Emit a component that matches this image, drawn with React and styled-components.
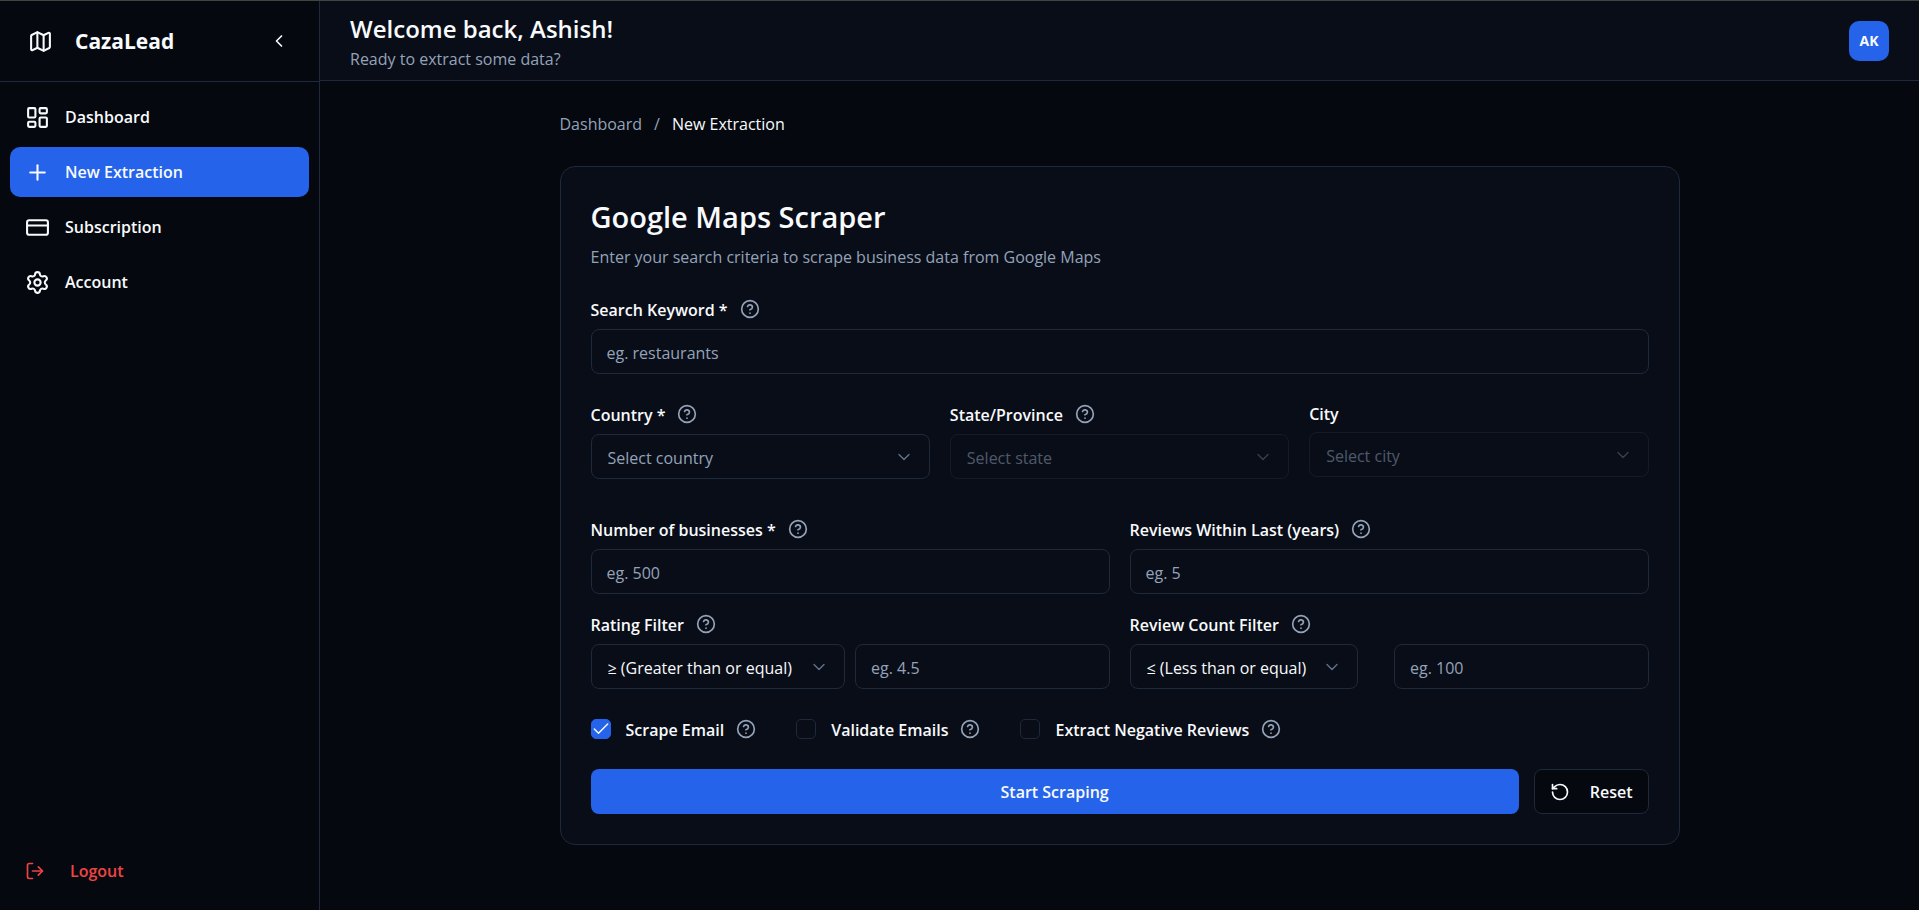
import React from 'react';
import {useState} from 'react';
import styled,{createGlobalStyle} from 'styled-components';
import {Check,ChevronDown,ChevronLeft,CircleHelp,CreditCard,LayoutDashboard,LogOut,Map,Plus,RotateCcw,Settings} from 'lucide-react';

const navItems=[
  {name:"Dashboard",icon:LayoutDashboard},
  {name:"New Extraction",icon:Plus},
  {name:"Subscription",icon:CreditCard},
  {name:"Account",icon:Settings},
];
const defaultChecks={email:true,validate:false,negative:false};

function Help({about}) {
  return (
    <HelpButton type="button" aria-label={`Help: ${about}`}><CircleHelp size={20}/></HelpButton>
  );
}

function Field({id,label,help=true,children}) {
  return (
    <FieldBox>
      <LabelRow>
        <Label htmlFor={id}>{label}</Label>
        {help && <Help about={label}/>}
      </LabelRow>
      {children}
    </FieldBox>
  );
}

function Dropdown({id,options,placeholder,disabled,fit,label}) {
  return (
    <SelectWrap $disabled={disabled} $fit={fit}>
      <Select id={id} disabled={disabled} $muted={placeholder} aria-label={label}>
        {options.map((option)=>(
          <option key={option}>{option}</option>
        ))}
      </Select>
      <ChevronDown size={20} strokeWidth={1.6}/>
    </SelectWrap>
  );
}

function CheckOption({id,label,checked,onChange}) {
  return (
    <CheckItem>
      <CheckMark>
        <CheckBox id={id} type="checkbox" checked={checked} onChange={onChange}/>
        {checked && <Check size={20} strokeWidth={1.8}/>}
      </CheckMark>
      <LabelRow>
        <Label htmlFor={id}>{label}</Label>
        <Help about={label}/>
      </LabelRow>
    </CheckItem>
  );
}

function App() {
  const[activePage,setActivePage]=useState("New Extraction");
  const[checks,setChecks]=useState(defaultChecks);
  const toggle=(key)=>setChecks({...checks,[key]:!checks[key]});
  return (
    <>
    <GlobalStyle/>
    <Page>
      <Sidebar>
        <Brand>
          <Map size={25}/>
          <BrandName>CazaLead</BrandName>
          <IconButton type="button" aria-label="Collapse sidebar"><ChevronLeft size={20}/></IconButton>
        </Brand>
        <Nav>
          {navItems.map(({name,icon:Icon})=>(
            <NavLink key={name} href="#" $active={activePage===name} onClick={()=>setActivePage(name)}>
              <Icon size={25}/>
              {name}
            </NavLink>
          ))}
        </Nav>
        <Logout type="button"><LogOut size={20}/>Logout</Logout>
      </Sidebar>
      <Content>
        <Header>
          <div>
            <Welcome>Welcome back, Ashish!</Welcome>
            <Muted>Ready to extract some data?</Muted>
          </div>
          <Avatar type="button">AK</Avatar>
        </Header>
        <Main>
          <Breadcrumb aria-label="Breadcrumb">
            <a href="#">Dashboard</a>
            <span>/</span>
            <Current>New Extraction</Current>
          </Breadcrumb>
          <Card onSubmit={(e)=>e.preventDefault()} onReset={()=>setChecks(defaultChecks)}>
            <CardHeader>
              <Title>Google Maps Scraper</Title>
              <Muted>Enter your search criteria to scrape business data from Google Maps</Muted>
            </CardHeader>
            <Field id="keyword" label="Search Keyword *">
              <Input id="keyword" placeholder="eg. restaurants"/>
            </Field>
            <Places>
              <Field id="country" label="Country *">
                <Dropdown id="country" options={["Select country"]} placeholder/>
              </Field>
              <Field id="state" label="State/Province">
                <Dropdown id="state" options={["Select state"]} placeholder disabled/>
              </Field>
              <Field id="city" label="City" help={false}>
                <Dropdown id="city" options={["Select city"]} placeholder disabled/>
              </Field>
            </Places>
            <Filters>
              <Field id="count" label="Number of businesses *">
                <Input id="count" placeholder="eg. 500"/>
              </Field>
              <Field id="years" label="Reviews Within Last (years)">
                <Input id="years" placeholder="eg. 5"/>
              </Field>
              <Field id="rating" label="Rating Filter">
                <Pair>
                  <Dropdown label="Rating comparison" options={["≥ (Greater than or equal)"]}/>
                  <Input id="rating" placeholder="eg. 4.5"/>
                </Pair>
              </Field>
              <Field id="reviews" label="Review Count Filter">
                <Pair>
                  <Dropdown label="Review count comparison" options={["≤ (Less than or equal)"]} fit/>
                  <Input id="reviews" placeholder="eg. 100"/>
                </Pair>
              </Field>
            </Filters>
            <Checks>
              <CheckOption id="email" label="Scrape Email" checked={checks.email} onChange={()=>toggle("email")}/>
              <CheckOption id="validate" label="Validate Emails" checked={checks.validate} onChange={()=>toggle("validate")}/>
              <CheckOption id="negative" label="Extract Negative Reviews" checked={checks.negative} onChange={()=>toggle("negative")}/>
            </Checks>
            <Actions>
              <Submit type="submit">Start Scraping</Submit>
              <Reset type="reset"><RotateCcw size={20}/>Reset</Reset>
            </Actions>
          </Card>
        </Main>
      </Content>
    </Page>
    </>
  );
}

const GlobalStyle=createGlobalStyle`
*{
    box-sizing:border-box;
    margin:0;
}
body{
    background:#05080f;
    color:#f8fafc;
    font-family:"Segoe UI","Open Sans","Noto Sans",sans-serif;
    font-size:16px;
    line-height:24px;
}
button,input,select{
    font:inherit;
    color:inherit;
}
button{
    padding:0;
    border:none;
    background:none;
    cursor:pointer;
}
a{
    color:inherit;
    text-decoration:none;
}
svg{
    flex-shrink:0;
}
`;
const Page=styled.div`
display:flex;
min-height:100vh;
border-top:1px solid #41443f;
`;
const Sidebar=styled.aside`
display:flex;
flex-direction:column;
width:320px;
flex-shrink:0;
border-right:1px solid #1e293b;
`;
const Brand=styled.div`
display:flex;
align-items:center;
height:81px;
padding:0 30px 0 28px;
border-bottom:1px solid #1e293b;
`;
const BrandName=styled.span`
flex:1;
margin-left:22px;
font-size:21px;
font-weight:700;
`;
const IconButton=styled.button`
display:flex;
`;
const Nav=styled.nav`
display:flex;
flex-direction:column;
gap:5px;
flex:1;
padding:10px;
`;
const NavLink=styled.a`
display:flex;
align-items:center;
gap:15px;
height:50px;
padding:0 15px;
border-radius:10px;
font-weight:600;
background:${({$active})=>$active ? "#2563eb" : "transparent"};
`;
const Logout=styled.button`
display:flex;
align-items:center;
gap:25px;
height:78px;
padding:0 25px;
color:#ef4444;
font-weight:600;
`;
const Content=styled.div`
flex:1;
min-width:0;
`;
const Header=styled.header`
display:flex;
align-items:center;
justify-content:space-between;
height:80px;
padding:0 30px;
background:#090d18;
border-bottom:1px solid #1e293b;
`;
const Welcome=styled.h1`
font-size:24px;
font-weight:600;
line-height:36px;
`;
const Muted=styled.p`
color:#94a3b8;
`;
const Avatar=styled.button`
width:40px;
height:40px;
border-radius:10px;
background:#2563eb;
font-size:14px;
font-weight:700;
`;
const Main=styled.main`
max-width:1120px;
margin:0 auto;
padding:30px 0;
`;
const Breadcrumb=styled.nav`
display:flex;
gap:12px;
margin-bottom:28px;
line-height:27px;
color:#94a3b8;
`;
const Current=styled.span`
color:#f8fafc;
`;
const Card=styled.form`
display:flex;
flex-direction:column;
gap:30px;
padding:30px;
background:#090d18;
border:1px solid #1e293b;
border-radius:15px;
`;
const CardHeader=styled.div`
display:flex;
flex-direction:column;
gap:8px;
`;
const Title=styled.h2`
font-size:29px;
font-weight:600;
line-height:40px;
`;
const FieldBox=styled.div`
display:flex;
flex-direction:column;
gap:10px;
min-width:0;
`;
const LabelRow=styled.div`
display:flex;
align-items:center;
gap:12px;
`;
const Label=styled.label`
padding-top:2px;
font-weight:600;
line-height:16px;
`;
const HelpButton=styled.button`
display:flex;
color:#94a3b8;
`;
const Input=styled.input`
width:100%;
min-width:0;
height:45px;
padding:2px 15px 0;
background:transparent;
border:1px solid #1e293b;
border-radius:8px;
&::placeholder{
    color:#94a3b8;
    opacity:1;
}
`;
const SelectWrap=styled.div`
display:grid;
align-items:center;
justify-self:${({$fit})=>$fit ? "start" : "stretch"};
opacity:${({$disabled})=>$disabled ? 0.5 : 1};
svg{
    grid-area:1/1;
    justify-self:end;
    margin-right:16px;
    color:#64748b;
    pointer-events:none;
}
`;
const Select=styled.select`
grid-area:1/1;
appearance:none;
width:100%;
height:45px;
padding:2px 50px 0 16px;
background:transparent;
border:1px solid #1e293b;
border-radius:8px;
color:${({$muted})=>$muted ? "#94a3b8" : "#f8fafc"};
opacity:1;
`;
const Places=styled.div`
display:grid;
grid-template-columns:repeat(3,1fr);
gap:20px;
margin-bottom:10px;
`;
const Filters=styled.div`
display:grid;
grid-template-columns:repeat(2,1fr);
gap:20px;
`;
const Pair=styled.div`
display:grid;
grid-template-columns:repeat(2,1fr);
gap:10px;
`;
const Checks=styled.div`
display:flex;
gap:40px;
`;
const CheckItem=styled.div`
display:flex;
align-items:center;
gap:15px;
`;
const CheckMark=styled.div`
display:grid;
place-items:center;
svg{
    grid-area:1/1;
    pointer-events:none;
}
`;
const CheckBox=styled.input`
grid-area:1/1;
appearance:none;
width:20px;
height:20px;
border:1px solid #1e293b;
border-radius:5px;
&:checked{
    background:#2563eb;
    border-color:#2563eb;
}
`;
const Actions=styled.div`
display:flex;
gap:15px;
`;
const Submit=styled.button`
flex:1;
height:45px;
border-radius:8px;
background:#2563eb;
font-weight:600;
`;
const Reset=styled.button`
display:flex;
align-items:center;
gap:20px;
height:45px;
padding:0 15px;
background:#05080f;
border:1px solid #1e293b;
border-radius:8px;
font-weight:600;
`;
export default App;
